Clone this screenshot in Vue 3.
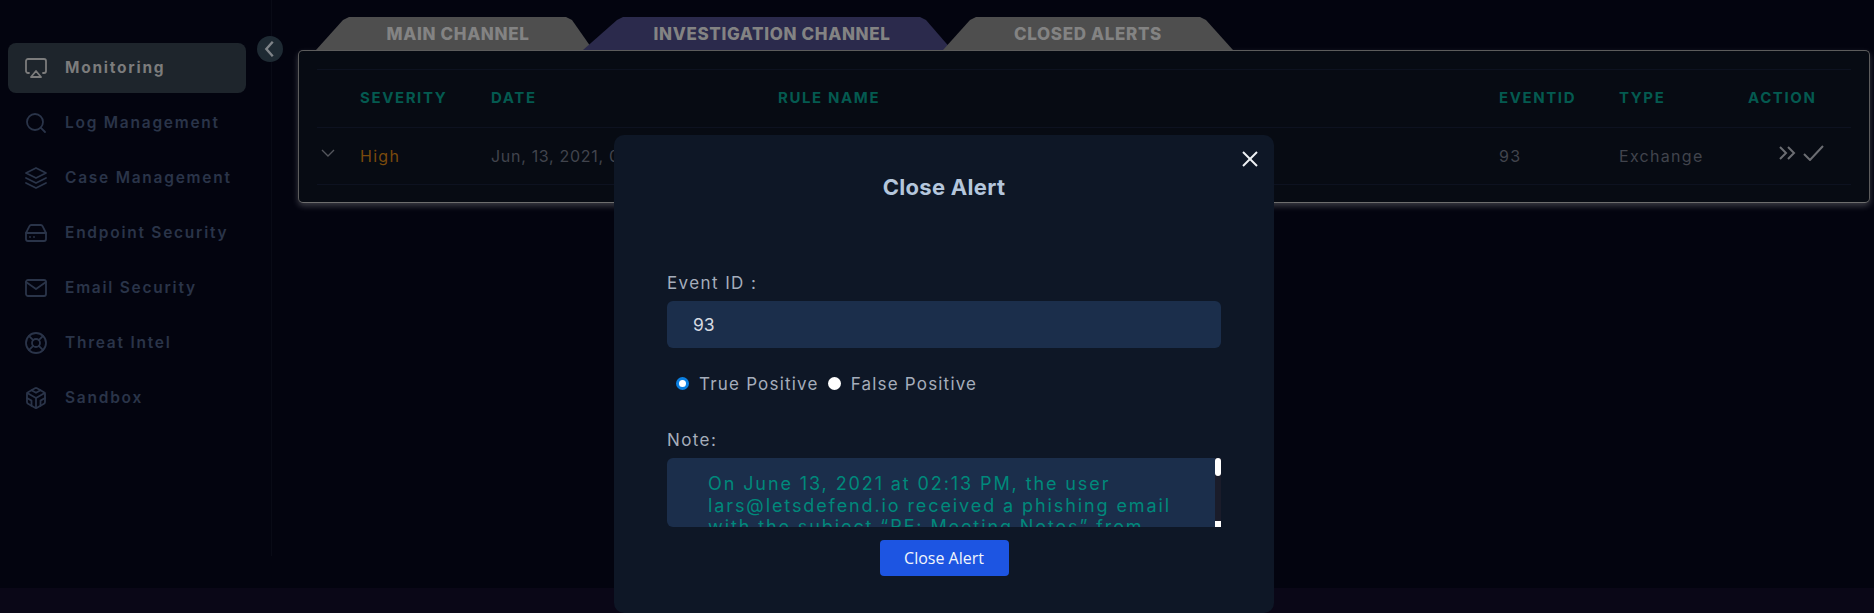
<template>
  <div class="page">
    <div class="layout">
      <aside class="sidebar">
        <a v-for="item in menu" :key="item.label" class="nav-item" :class="{ active: item.active }">
          <svg class="nav-icon" viewBox="0 0 24 24" v-html="item.icon"></svg>
          <span class="nav-label">{{ item.label }}</span>
        </a>
        <button class="collapse">
          <svg viewBox="0 0 24 24" width="22" height="22"><polyline points="15 4 8 12 15 20" /></svg>
        </button>
      </aside>

      <main class="content">
        <div class="tabs">
          <div v-for="tab in tabs" :key="tab.name" class="tab" :class="tab.cls">{{ tab.name }}</div>
        </div>
        <section class="panel">
          <div class="grid head">
            <span></span>
            <span v-for="col in columns" :key="col">{{ col }}</span>
          </div>
          <div class="grid row">
            <svg class="chevron" viewBox="0 0 24 24" width="18" height="18"><polyline points="4 8 12 16 20 8" /></svg>
            <span class="high">High</span>
            <span class="date">Jun, 13, 2021, 02:13 PM</span>
            <span></span>
            <span>93</span>
            <span>Exchange</span>
            <span class="actions">
              <svg viewBox="0 0 17 14" width="17" height="14"><polyline points="1 1 7 7 1 13" /><polyline points="9 1 15 7 9 13" /></svg>
              <svg viewBox="0 0 21 16" width="21" height="16"><polyline points="1 9 7 15 20 1" /></svg>
            </span>
          </div>
        </section>
      </main>
    </div>
    <div class="bottom-band"></div>

    <div class="modal">
      <button class="close-x">
        <svg viewBox="0 0 24 24" width="24" height="24"><line x1="5" y1="5" x2="19" y2="19" /><line x1="19" y1="5" x2="5" y2="19" /></svg>
      </button>
      <h2>Close Alert</h2>
      <label class="field-label">Event ID :</label>
      <input class="event-id" type="text" value="93" readonly />
      <div class="radios">
        <label><input type="radio" name="verdict" checked /> <span>True Positive</span></label>
        <label><input type="radio" name="verdict" /> <span>False Positive</span></label>
      </div>
      <label class="field-label note-label">Note:</label>
      <div class="note-wrap">
        <textarea class="note" readonly v-model="note"></textarea>
        <div class="scroll-track">
          <div class="scroll-thumb"></div>
          <div class="scroll-corner"></div>
        </div>
      </div>
      <button class="submit">Close Alert</button>
    </div>
  </div>
</template>

<script setup>
import { ref } from "vue";

const menu = [
  {
    label: "Monitoring",
    active: true,
    icon: '<path d="M5 17H4a2 2 0 0 1-2-2V5a2 2 0 0 1 2-2h16a2 2 0 0 1 2 2v10a2 2 0 0 1-2 2h-1"/><polygon points="12 15 17 21 7 21 12 15"/>'
  },
  {
    label: "Log Management",
    icon: '<circle cx="11" cy="11" r="8"/><line x1="21" y1="21" x2="16.65" y2="16.65"/>'
  },
  {
    label: "Case Management",
    icon: '<polygon points="12 2 2 7 12 12 22 7 12 2"/><polyline points="2 17 12 22 22 17"/><polyline points="2 12 12 17 22 12"/>'
  },
  {
    label: "Endpoint Security",
    icon: '<line x1="22" y1="12" x2="2" y2="12"/><path d="M5.45 5.11L2 12v6a2 2 0 0 0 2 2h16a2 2 0 0 0 2-2v-6l-3.45-6.89A2 2 0 0 0 16.76 4H7.24a2 2 0 0 0-1.79 1.11z"/><line x1="6" y1="16" x2="6.01" y2="16"/><line x1="10" y1="16" x2="10.01" y2="16"/>'
  },
  {
    label: "Email Security",
    icon: '<path d="M4 4h16c1.1 0 2 .9 2 2v12c0 1.1-.9 2-2 2H4c-1.1 0-2-.9-2-2V6c0-1.1.9-2 2-2z"/><polyline points="22,6 12,13 2,6"/>'
  },
  {
    label: "Threat Intel",
    icon: '<circle cx="12" cy="12" r="10"/><circle cx="12" cy="12" r="4"/><line x1="4.93" y1="4.93" x2="9.17" y2="9.17"/><line x1="14.83" y1="14.83" x2="19.07" y2="19.07"/><line x1="14.83" y1="9.17" x2="19.07" y2="4.93"/><line x1="4.93" y1="19.07" x2="9.17" y2="14.83"/>'
  },
  {
    label: "Sandbox",
    icon: '<path d="M21 16V8a2 2 0 0 0-1-1.73l-7-4a2 2 0 0 0-2 0l-7 4A2 2 0 0 0 3 8v8a2 2 0 0 0 1 1.73l7 4a2 2 0 0 0 2 0l7-4A2 2 0 0 0 21 16z"/><polyline points="7.5 4.21 12 6.81 16.5 4.21"/><polyline points="7.5 19.79 7.5 14.6 3 12"/><polyline points="21 12 16.5 14.6 16.5 19.79"/><polyline points="3.27 6.96 12 12.01 20.73 6.96"/><line x1="12" y1="22.08" x2="12" y2="12"/>'
  }
];

const tabs = [
  { name: "MAIN CHANNEL", cls: "tab-main" },
  { name: "INVESTIGATION CHANNEL", cls: "tab-investigation" },
  { name: "CLOSED ALERTS", cls: "tab-closed" }
];

const columns = ["SEVERITY", "DATE", "RULE NAME", "EVENTID", "TYPE", "ACTION"];

const note = ref(
  "On June 13, 2021 at 02:13 PM, the user lars@letsdefend.io received a phishing email with the subject “RE: Meeting Notes” from"
);
</script>

<style>
html,
body {
  margin: 0;
  background: #03040f;
}
</style>

<style scoped>
.page {
  position: relative;
  display: flex;
  flex-direction: column;
  height: 613px;
  overflow: hidden;
  background: #03040f;
  font-family: Inter, "Liberation Sans", sans-serif;
}
.layout {
  display: flex;
  flex: 1;
  min-height: 0;
}
.bottom-band {
  height: 25px;
  background: #0a0717;
}

.sidebar {
  position: relative;
  box-sizing: border-box;
  width: 272px;
  height: 556px;
  flex: none;
  padding: 43px 25px 0 8px;
  display: flex;
  flex-direction: column;
  gap: 5px;
  border-right: 1px solid #090b16;
}
.nav-item {
  display: flex;
  align-items: center;
  gap: 17px;
  height: 50px;
  padding-left: 16px;
  border-radius: 8px;
  color: #2a3449;
  font-size: 15.5px;
  font-weight: 600;
  letter-spacing: 1.75px;
}
.nav-label {
  margin-top: -1px;
}
.nav-item.active {
  background: #1e252c;
  color: #7c7c7c;
  font-weight: 700;
}
.nav-icon {
  width: 24px;
  height: 24px;
  flex: none;
  fill: none;
  stroke: currentColor;
  stroke-width: 1.8;
  stroke-linecap: round;
  stroke-linejoin: round;
}
.collapse {
  position: absolute;
  top: 36px;
  left: 257px;
  width: 26px;
  height: 26px;
  padding: 0;
  display: flex;
  align-items: center;
  justify-content: center;
  border: none;
  border-radius: 50%;
  background: #1e2a33;
}
.collapse polyline {
  fill: none;
  stroke: #7f8489;
  stroke-width: 2.6;
}

.content {
  flex: 1;
  min-width: 0;
  padding: 17px 4px 0 26px;
}
.tabs {
  display: flex;
  margin-left: 18px;
  height: 33px;
}
.tab {
  --l: 30px;
  --r: 30px;
  box-sizing: border-box;
  height: 33px;
  line-height: 35px;
  text-align: center;
  color: #838383;
  font-size: 17px;
  font-weight: 800;
  letter-spacing: 0.65px;
  background: #4e4e4e;
  clip-path: polygon(
    0 100%,
    calc(var(--l) - 3px) 3px,
    calc(var(--l) + 3px) 0,
    calc(100% - var(--r) - 3px) 0,
    calc(100% - var(--r) + 3px) 3px,
    100% 100%
  );
}
.tab-main {
  width: 277px;
  padding-left: 7px;
  --r: 24px;
}
.tab-investigation {
  width: 369px;
  margin-left: -10px;
  padding-left: 9px;
  --l: 37px;
  --r: 29px;
  background: #2b2a4c;
}
.tab-closed {
  width: 290px;
  margin-left: -9px;
}

.panel {
  box-sizing: border-box;
  height: 153px;
  padding: 18px 18px 0;
  background: #070b13;
  border: 1px solid #5c5c5c;
  border-bottom-color: #6e6e6e;
  border-radius: 5px;
  box-shadow: 0 3px 6px rgba(255, 255, 255, 0.22);
}
.grid {
  box-sizing: border-box;
  display: grid;
  grid-template-columns: 43px 131px 287px 721px 120px 129px 1fr;
  align-items: center;
  height: 58px;
  border-top: 1px solid #0d1220;
}
.row {
  border-bottom: 1px solid #0d1220;
  color: #41444d;
  font-size: 16px;
  letter-spacing: 1.3px;
}
.head {
  padding-bottom: 2px;
  color: #045a50;
  font-size: 15px;
  font-weight: 700;
  letter-spacing: 1.6px;
}
.high {
  color: #7a4a0c;
}
.date {
  letter-spacing: 0.7px;
}
.chevron {
  margin-left: 2px;
  margin-top: -6px;
}
.chevron polyline {
  fill: none;
  stroke: #54565c;
  stroke-width: 1.8;
}
.actions {
  display: flex;
  align-items: center;
  gap: 7px;
  padding-left: 31px;
  margin-top: -6px;
}
.actions polyline {
  fill: none;
  stroke: #6b6d72;
  stroke-width: 2;
}

.modal {
  position: absolute;
  left: 614px;
  top: 135px;
  box-sizing: border-box;
  width: 660px;
  height: 478px;
  padding: 0 53px;
  display: flex;
  flex-direction: column;
  background: #0e1726;
  border-radius: 10px;
}
.close-x {
  position: absolute;
  top: 12px;
  right: 12px;
  padding: 0;
  display: flex;
  border: none;
  background: none;
}
.close-x line {
  stroke: #eef1f5;
  stroke-width: 2;
}
.modal h2 {
  margin: 38px 0 0;
  height: 28px;
  line-height: 28px;
  text-align: center;
  color: #b4c6dc;
  font-size: 22px;
  font-weight: 700;
  letter-spacing: 0.3px;
}
.field-label {
  margin-top: 70px;
  height: 24px;
  line-height: 24px;
  color: #a5adbb;
  font-size: 17px;
  letter-spacing: 1.4px;
}
.event-id {
  box-sizing: border-box;
  width: 100%;
  height: 47px;
  margin-top: 6px;
  padding: 0 26px;
  border: none;
  outline: none;
  border-radius: 6px;
  background: #1b2e4b;
  color: #d5d9e0;
  font-family: inherit;
  font-size: 17.5px;
}
.radios {
  display: flex;
  gap: 9px;
  margin-top: 24px;
  padding-left: 9px;
  height: 24px;
  align-items: center;
  color: #a5adbb;
  font-size: 17px;
  letter-spacing: 1.2px;
}
.radios label {
  display: flex;
  align-items: center;
  gap: 5px;
}
.radios input {
  appearance: none;
  box-sizing: border-box;
  width: 13px;
  height: 13px;
  margin: 0 5px 2px 0;
  border-radius: 50%;
  background: #fff;
}
.radios input:checked {
  border: 3.5px solid #0b7fe0;
}
.note-label {
  margin-top: 32px;
}
.note-wrap {
  position: relative;
  display: flex;
  height: 69px;
  margin-top: 6px;
}
.note {
  box-sizing: border-box;
  display: block;
  flex: 1;
  min-width: 0;
  height: 69px;
  padding: 15px 20px 0 41px;
  margin-right: 6px;
  border: none;
  outline: none;
  overflow: hidden;
  resize: none;
  border-radius: 6px 0 0 6px;
  background: #1b2e4b;
  color: #00897b;
  font-family: inherit;
  font-size: 18px;
  line-height: 21.5px;
  letter-spacing: 1.9px;
}
.scroll-track {
  position: absolute;
  top: 0;
  right: 0;
  bottom: 0;
  width: 6px;
  background: #1a1c2a;
}
.scroll-thumb {
  height: 18px;
  background: #fff;
  border-radius: 3px;
}
.scroll-corner {
  position: absolute;
  bottom: 0;
  left: 0;
  width: 6px;
  height: 6px;
  background: #fff;
}
.submit {
  align-self: center;
  width: 129px;
  height: 36px;
  margin-top: 13px;
  border: none;
  border-radius: 4px;
  background: #1d55e2;
  color: #f2f5fb;
  font-family: "Open Sans", sans-serif;
  font-size: 16px;
}
</style>
